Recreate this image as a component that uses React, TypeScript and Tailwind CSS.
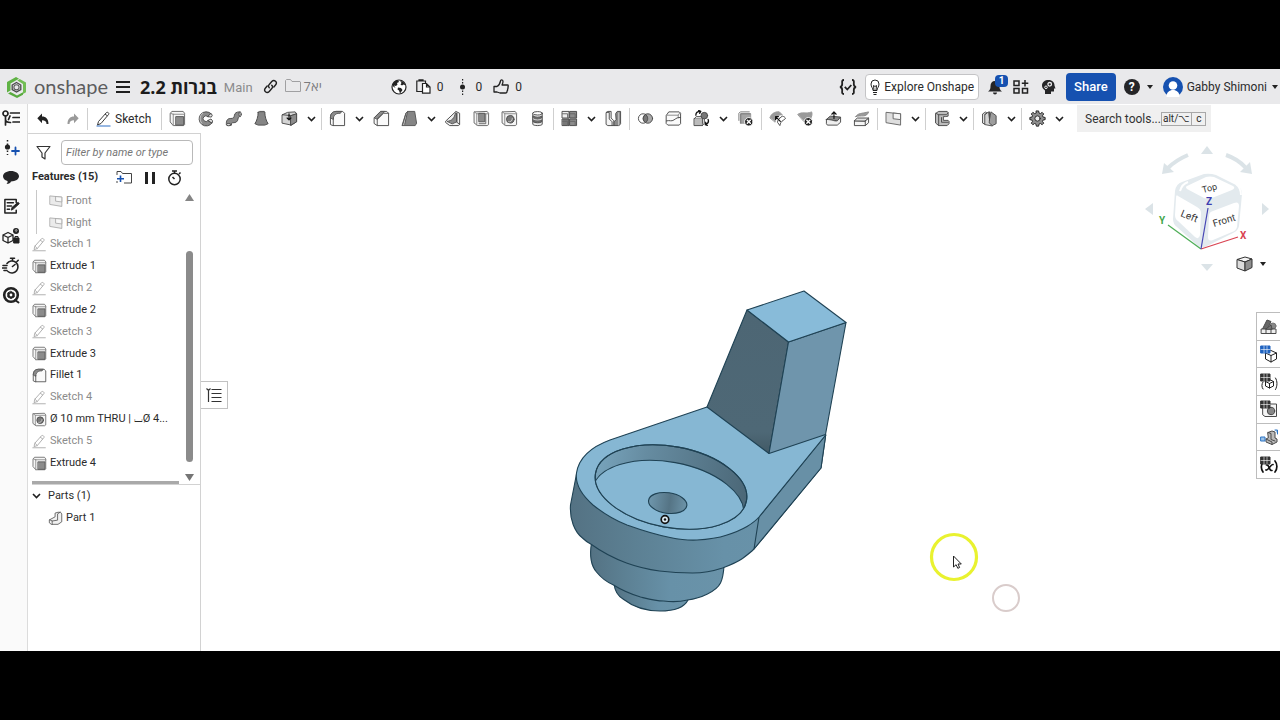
import React from 'react';

type IconProps = { children: React.ReactNode; size?: number; className?: string };

function Icon({ children, size = 18, className = '' }: IconProps) {
  return (
    <svg
      width={size}
      height={size}
      viewBox="0 0 18 18"
      fill="none"
      stroke="#4a4a4a"
      strokeWidth="1"
      strokeLinejoin="round"
      strokeLinecap="round"
      className={`shrink-0 ${className}`}
      aria-hidden="true"
    >
      {children}
    </svg>
  );
}

const art = {
  extrude: (
    <>
      <path d="M1.500 3.500 3 1.500h12l1.500 2v12l-1 1H4.500L1.500 13z" fill="#f6f6f6" stroke="#666" />
      <path d="M4.500 4.500h12M4.500 4.500v12M1.500 3.500l3 1" stroke="#888" />
      <rect x="7.500" y="7" width="8" height="9" fill="#8b8b8b" stroke="#555" />
    </>
  ),
  revolve: (
    <>
      <path d="M15 4A7.500 7.500 0 1 0 16 13.500l-4.200-2.500a3 3 0 1 1-.3-4z" fill="#8b8b8b" />
      <path d="M6 3.500a7 7 0 0 0-1 10.500" stroke="#c8c8c8" />
      <path d="m11.800 11 3-1.500 1.700 2-.5 2z" fill="#e5e5e5" />
      <path d="m11.500 7 3.700.5 1-2L15 4z" fill="#e5e5e5" />
    </>
  ),
  sweep: (
    <>
      <path d="M1.500 15.500c-.5-4 1-6.500 4-6.500 3.500 0 4-.5 4.500-3.500.5-2.500 2-3.500 6-3.500v5c-1.500 0-2 .5-2.200 2.500-.5 3-2.300 4-5.300 4-1.500 0-2 .5-2 2.500z" fill="#8b8b8b" />
      <ellipse cx="4" cy="15.500" rx="2.500" ry="1.200" fill="#ddd" />
      <ellipse cx="16" cy="4.500" rx="1.200" ry="2.500" fill="#ddd" />
    </>
  ),
  loft: (
    <>
      <path d="M5.500 2.500h7c.2 5 1.500 9 3.500 12l-3.500 1.500h-7L2 14.500c2-3 3.300-7 3.500-12z" fill="#858585" />
      <path d="M5.500 2.500 7 1.500h5l.5 1" fill="#ddd" />
    </>
  ),
  thicken: (
    <>
      <path d="M1.500 5 7 2.500l8-.5 1.500 2v8.500L11 16l-9.500-2z" fill="#d4d4d4" />
      <path d="m1.500 5 9 1 6-2M10.500 6v10" />
      <path d="M10.500 6 16.500 4v8.500L10.500 16z" fill="#8b8b8b" />
      <path d="M8.500 4v6M6.500 8.500l2 2 2-2" stroke="#111" strokeWidth="1.300" />
    </>
  ),
  fillet: (
    <>
      <path d="M1.500 15V8c0-4 2-6 6-6.500h7l2 2v13h-12z" fill="#fafafa" />
      <path d="M1.500 8c0-4 2-6.500 6-6.500h6L12 3.500h-2.500c-3 .5-5 2.500-5 6z" fill="#8b8b8b" stroke="#555" />
      <path d="M4.500 9v7.500" />
    </>
  ),
  chamfer: (
    <>
      <path d="M1.500 8 8 1.500h6.500l2 2v13h-12l-3-2z" fill="#fafafa" />
      <path d="M1.500 8 8 1.500h4.500L5 9.500z" fill="#8b8b8b" stroke="#555" />
      <path d="M4.500 9.500v7M4.500 9.500l6.500-6h5.500" stroke="#555" />
    </>
  ),
  draft: (
    <>
      <path d="M5.500 3 7 1.500h7.500L16.500 14l-1.500 2.500H1.500z" fill="#858585" stroke="#555" />
      <path d="m1.500 16.500 4-13.500L7 1.500 4 15" fill="#d5d5d5" stroke="#555" />
    </>
  ),
  rib: (
    <>
      <path d="M1 11.500 11.500 1.500l4 2v12l-1.500 1H5L1 13.500z" fill="#f2f2f2" />
      <path d="M2.500 12c5-.5 7.500-3.500 8.500-9l1.500.5v9L8 14.500z" fill="#8b8b8b" stroke="#555" />
      <path d="M12.500 3.500v9.500l3 2" />
    </>
  ),
  shell: (
    <>
      <path d="M1.500 2 15 1.500l1.500 2v12l-1.500 1H5L1.500 14z" fill="#f6f6f6" stroke="#666" />
      <path d="M1.500 2 4 4h12M4 4v12" stroke="#888" />
      <rect x="6.500" y="3.500" width="6" height="9" fill="#8b8b8b" stroke="#555" />
      <path d="M6.500 14.500h7v-10" stroke="#666" />
    </>
  ),
  hole: (
    <>
      <path d="M1.500 2 15 1.500l1.500 2v12l-1.500 1H5L1.500 14z" fill="#f6f6f6" stroke="#666" />
      <path d="M1.500 2 4 4h12M4 4v12" stroke="#888" />
      <circle cx="9.800" cy="9.800" r="4" fill="#777" />
      <path d="M8 12.500c2 .5 4-1 4-3.500" stroke="#ccc" />
    </>
  ),
  thread: (
    <>
      <path d="M4 3.500v11.500c0 2 10 2 10 0V3.500z" fill="#ececec" />
      <ellipse cx="9" cy="3.500" rx="5" ry="1.800" fill="#fff" />
      <path d="M4.500 6.500c2 1.500 7 1.500 9 0v6c-2 1.500-7 1.500-9 0z" fill="#6b6b6b" />
      <path d="M4.500 9.500c2 1.500 7 1.500 9 0" stroke="#ddd" />
    </>
  ),
  pattern: (
    <>
      <rect x="1.500" y="1.500" width="7" height="7" fill="#eee" />
      <rect x="9.500" y="1.500" width="7" height="7" fill="#8b8b8b" />
      <rect x="1.500" y="9.500" width="7" height="7" fill="#777" />
      <rect x="9.500" y="9.500" width="7" height="7" fill="#8b8b8b" />
      <path d="M1.500 4H7v4.500M9.500 4H15v4.500M1.500 12H7v4.500M9.500 12H15v4.500" stroke="#666" />
    </>
  ),
  mirror: (
    <>
      <path d="M1.500 2.500 3 1.500h3.500v7l3 3v5H3l-1.500-1z" fill="#f3f3f3" />
      <path d="M1.500 2.500h3v7l3 3v4" />
      <path d="M11.500 3.500 13 1.500h3.500v13L15 16.500H9.500v-4l2-2z" fill="#8b8b8b" />
      <path d="M14.500 3v13" stroke="#ccc" />
    </>
  ),
  boolean: (
    <>
      <circle cx="6.500" cy="9" r="5" />
      <circle cx="11.500" cy="9" r="5" fill="#a9a9a9" />
      <path d="M9 4.700a5 5 0 0 1 0 8.600 5 5 0 0 1 0-8.600z" fill="#777" />
    </>
  ),
  split: (
    <>
      <path d="M1.500 5.500 4 2h11l1.500 1.500v11l-1.500 1.500H3l-1.500-1.500z" fill="#fafafa" />
      <path d="M1.500 5.500h12.500l2-3M14 5.500v3" stroke="#888" />
      <path d="M1.500 11.500c4-1 5 1 8-1s4-3 7-2.500" />
    </>
  ),
  transform: (
    <>
      <rect x="1.500" y="9" width="8.500" height="7.500" fill="#bbb" />
      <path d="m1.500 9 2-2h8.500l-2 2M12 7v7l-2 2.500" fill="#e9e9e9" />
      <circle cx="12" cy="6" r="3.500" fill="#777" />
      <path d="M3 5.500C3 3 5 1.500 8 1.500M6 .5l2.200 1L7 3.500M16 10c1 2.500-.5 4.500-3 5.500M13.500 13l-.5 2.500 2.200.7" stroke="#111" strokeWidth="1.400" />
    </>
  ),
  deletePart: (
    <>
      <path d="M2 11V3.500L3.500 2H13" fill="none" stroke="#777" />
      <rect x="4" y="4" width="10.500" height="10" fill="#a5a5a5" stroke="#999" />
      <path d="M4 14V4h10" stroke="#777" />
      <circle cx="12.500" cy="12.500" r="4.500" fill="#222" stroke="#fff" />
      <path d="m10.900 10.900 3.200 3.200m0-3.200-3.200 3.200" stroke="#fff" strokeWidth="1.500" />
    </>
  ),
  moveFace: (
    <>
      <path d="M1 8C2.500 4 6 1.500 11 2l3 3C9 5 7 8 6.500 12.500z" fill="#9a9a9a" stroke="#999" />
      <path d="m11 9 3-2.500c2 .5 3 1 3.500 2.500L15 11c-2 1-3 3-3.500 5.500L9 13c.2-2 1-3 2-4z" fill="#fff" />
      <path d="m12 12-5-5m0 3V7h3" stroke="#111" strokeWidth="1.300" />
    </>
  ),
  deleteFace: (
    <>
      <path d="M1 4.500C5 1.500 10 4.500 15.500 2c1 2.500 0 5-1 7l-6 4z" fill="#9a9a9a" stroke="#999" />
      <circle cx="12" cy="12.500" r="4.500" fill="#222" stroke="#fff" />
      <path d="m10.400 10.900 3.200 3.200m0-3.200-3.200 3.200" stroke="#fff" strokeWidth="1.500" />
    </>
  ),
  offsetFace: (
    <>
      <path d="m1.500 10 4-3.500 11 1-3 3.500z" fill="#8b8b8b" />
      <path d="M1.500 10v4.500l1 1.500h10.500l3.500-3V7.500l-3.500 4c-4 .5-5-1.500-11.500-1.500z" fill="#eee" />
      <path d="M9.500 9V2m-2.300 2.500L9.500 2l2.300 2.500" stroke="#111" strokeWidth="1.200" />
    </>
  ),
  replaceFace: (
    <>
      <path d="M3 7C5 3 9 4 16.500 2c-1 3-3 4-5 4.200C8 6.500 6 6 3 7z" fill="#9a9a9a" stroke="#888" />
      <path d="M1.500 11.500v5H13l3.500-3v-5L13 11.500z" fill="#f5f5f5" />
      <path d="m1.500 11.500 3-3h12l-3.500 3zM13 11.500v5" fill="#e2e2e2" />
    </>
  ),
  plane: (
    <>
      <path d="M1.500 2.500 16.500 4v12L1.500 13.500z" fill="#dedede" stroke="#666" />
      <path d="M9 3.300 16.500 4v6.200L9 9.300z" fill="#f4f4f4" stroke="#666" />
    </>
  ),
  helix: (
    <>
      <path d="M3 3.500 6 1.500h9l1 1.500v3.500l-3 .5h-2v4h5l1 1v2.500l-2 2H6L3 14z" fill="#bdbdbd" />
      <path d="M3 3.500 6 5v11.500M6 5h8l2-2M9 8v5h7" />
    </>
  ),
  sheet: (
    <>
      <path d="M2 4 5 2l1 1v9l-2 3-2-1z" fill="#e5e5e5" />
      <path d="M4 15V5l4-3 1 8 3 1v5.500z" fill="#d5d5d5" />
      <path d="m9 10 1.500-8 5.500 4v8.500l-4 2L9 14z" fill="#9d9d9d" />
      <path d="M9 2v9M4 5l2-2" />
    </>
  ),
  gear: (
    <>
      <path d="M7.800 1h2.400l.4 2.200 1.500.6 1.800-1.300 1.700 1.700-1.300 1.800.6 1.500 2.200.4v2.300l-2.200.4-.6 1.500 1.300 1.800-1.700 1.700-1.800-1.300-1.500.6-.4 2.200H7.800l-.4-2.200-1.500-.6-1.800 1.300-1.700-1.700 1.300-1.800-.6-1.500-2.200-.4V7.900l2.200-.4.6-1.500-1.300-1.800 1.700-1.700 1.800 1.300 1.500-.6z" fill="#8e8e8e" stroke="#222" />
      <circle cx="9" cy="9" r="2.800" fill="#eee" stroke="#222" />
    </>
  ),
  pencil: (
    <>
      <path d="m3.500 11 8-9c1.200-1 3.700.8 2.900 2.200l-8 9.600L3 15z" />
      <path d="m10 3.800 2.800 2.200M3.500 11l2.900 2.800" />
      <path d="M1 16.500h15" />
    </>
  ),
  part: (
    <>
      <path d="M2 10.500 8.500 7V2.500L12 1.500h3l1.500 2v9.500L12 16H4l-2-1.500z" fill="#f1f1f1" stroke="#555" />
      <path d="M2 10.500 5 12l6.500-1V3.500l3-2M5 12v4" stroke="#555" />
    </>
  ),
};

type Tool = { id: keyof typeof art; label: string; menu?: boolean };

const toolGroups: Tool[][] = [
  [
    { id: 'extrude', label: 'Extrude' },
    { id: 'revolve', label: 'Revolve' },
    { id: 'sweep', label: 'Sweep' },
    { id: 'loft', label: 'Loft' },
    { id: 'thicken', label: 'Thicken', menu: true },
  ],
  [
    { id: 'fillet', label: 'Fillet', menu: true },
    { id: 'chamfer', label: 'Chamfer' },
    { id: 'draft', label: 'Draft', menu: true },
    { id: 'rib', label: 'Rib' },
    { id: 'shell', label: 'Shell' },
    { id: 'hole', label: 'Hole' },
    { id: 'thread', label: 'External thread' },
  ],
  [
    { id: 'pattern', label: 'Linear pattern', menu: true },
    { id: 'mirror', label: 'Mirror' },
  ],
  [
    { id: 'boolean', label: 'Boolean' },
    { id: 'split', label: 'Split' },
    { id: 'transform', label: 'Transform', menu: true },
    { id: 'deletePart', label: 'Delete part' },
  ],
  [
    { id: 'moveFace', label: 'Move face' },
    { id: 'deleteFace', label: 'Delete face' },
    { id: 'offsetFace', label: 'Offset face' },
    { id: 'replaceFace', label: 'Replace face' },
  ],
  [{ id: 'plane', label: 'Plane', menu: true }],
  [{ id: 'helix', label: 'Frame', menu: true }],
  [{ id: 'sheet', label: 'Sheet metal', menu: true }],
  [{ id: 'gear', label: 'Custom features', menu: true }],
];

const features: { icon: keyof typeof art; name: string; dim?: boolean }[] = [
  { icon: 'pencil', name: 'Sketch 1', dim: true },
  { icon: 'extrude', name: 'Extrude 1' },
  { icon: 'pencil', name: 'Sketch 2', dim: true },
  { icon: 'extrude', name: 'Extrude 2' },
  { icon: 'pencil', name: 'Sketch 3', dim: true },
  { icon: 'extrude', name: 'Extrude 3' },
  { icon: 'fillet', name: 'Fillet 1' },
  { icon: 'pencil', name: 'Sketch 4', dim: true },
  { icon: 'hole', name: 'Ø 10 mm THRU | ⌴Ø 4...' },
  { icon: 'pencil', name: 'Sketch 5', dim: true },
  { icon: 'extrude', name: 'Extrude 4' },
];

function Chevron() {
  return (
    <svg width="9" height="6" viewBox="0 0 9 6" fill="none" stroke="#1f1f1f" strokeWidth="1.600" aria-hidden="true">
      <path d="m1 1 3.500 3.500L8 1" />
    </svg>
  );
}

function Caret() {
  return (
    <svg width="6" height="4" viewBox="0 0 6 4" fill="#222" className="shrink-0" aria-hidden="true">
      <path d="M0 0h6L3 4z" />
    </svg>
  );
}

function Divider() {
  return <span className="ml-0.5 mr-px h-[22px] w-px shrink-0 bg-[#cfcfcf]" />;
}

function Header() {
  return (
    <header className="flex h-[35px] shrink-0 items-center bg-[#e9e9eb] pl-[5px] pr-0.5 text-xs text-[#2b2b2b]">
      <a href="#home" className="flex items-center gap-1.5" aria-label="onshape">
        <svg width="23" height="24" viewBox="0 0 23 24" fill="none" aria-hidden="true">
          <path d="M2 17.500V7L11 2l3 1.700-8.500 4.700v7.200z" fill="#5fb244" />
          <path d="M12.300 5.500 14.700 4 21 7.400v9.800l-3 1.700V9z" fill="#72bd55" />
          <path d="m3 18.500 2.500-1.500 6.500 3.500 6-3.300v2.500L12 23z" fill="#58aa3e" />
          <path d="m11.500 7.500 4.300 2.500v4.600l-4.300 2.400-4.300-2.400V10z" fill="#e9e9eb" stroke="#4a4a4a" strokeWidth="1.300" />
          <circle cx="11.500" cy="12.300" r="2.600" stroke="#5a5a5a" strokeWidth="1.100" />
        </svg>
        <span className="pb-0.5 font-[Lato] text-xl leading-6 text-[#5c5c5e]">onshape</span>
      </a>
      <button type="button" aria-label="Menu" className="ml-2 flex h-4 w-[14px] flex-col justify-center gap-[3px]">
        <span className="h-0.5 w-full bg-[#1f1f1f]" />
        <span className="h-0.5 w-full bg-[#1f1f1f]" />
        <span className="h-0.5 w-full bg-[#1f1f1f]" />
      </button>
      <h1 dir="rtl" className="ml-2.5 whitespace-nowrap font-['Open_Sans'] text-lg font-bold leading-6 text-[#1c1c1c]">
        בגרות 2.2
      </h1>
      <span className="ml-[7px] pt-0.5 text-[13px] text-[#8b8b8d]">Main</span>
      <button type="button" aria-label="Copy link" className="ml-2.5">
        <Icon size={15}>
          <g stroke="#222" strokeWidth="1.700">
            <path d="m7.500 10.500c-1.500-1.500-1-3 0-4l3-3.500c1.500-1.500 3.200-1.500 4.500-.3s1.300 3 0 4.500L13 9.500" />
            <path d="M10.500 7.500c1.500 1.500 1 3 0 4l-3 3.500c-1.500 1.500-3.200 1.500-4.500.3s-1.300-3 0-4.500L5 8.500" />
          </g>
        </Icon>
      </button>
      <a href="#folder" className="ml-[7px] flex items-center gap-[3px] text-[13px] text-[#7b7b7d]">
        <svg width="16" height="14" viewBox="0 0 16 14" fill="none" stroke="#a0a0a2" aria-hidden="true">
          <path d="M.5 12.500v-11l1-1h4l1.500 2h8l.5.5v9.500z" />
        </svg>
        <span dir="rtl" className="font-['Open_Sans']">יא7</span>
      </a>

      <div className="ml-[69px] flex items-center">
        <button type="button" aria-label="Public document">
          <svg width="16" height="16" viewBox="0 0 16 16" fill="#fff" stroke="#222" strokeWidth="1.200" aria-hidden="true">
            <circle cx="8" cy="8" r="7" />
            <path d="M2 4.500 4 2l3-1 1 2-2 1 .5 1.500L5 7 3 6.500 4.500 9 1.500 7zM9 1.500l4 2 1.500 3-2-1-1.500 1-1.500-1 1-1.500zM7 8.500l3 .5 1.500 2L9 14.500l-1-3-1.500-1z" fill="#222" stroke="none" />
          </svg>
        </button>
        <button type="button" className="ml-[9px] flex items-center gap-1.5">
          <svg width="15" height="15" viewBox="0 0 15 15" fill="none" stroke="#222" strokeWidth="1.200" aria-hidden="true">
            <path d="M6 12.500H.800V2h8.700v2.500M3 2V.800h4V2" />
            <path d="M6.500 4.500h4L14 8v6.200H6.500zM10.500 4.500V8H14" fill="#fff" />
          </svg>
          0
        </button>
        <button type="button" className="ml-4 flex items-center gap-[11px]">
          <svg width="5" height="16" viewBox="0 0 5 16" fill="#222" aria-hidden="true">
            <circle cx="2.500" cy="8" r="2.500" />
            <path d="M2 0h1.200v1.500H2zM2 3h1.200v1.500H2zM2 11.500h1.200V13H2zM2 14.500h1.200V16H2z" />
          </svg>
          0
        </button>
        <button type="button" className="ml-[11px] flex items-center gap-1.5">
          <svg width="16" height="16" viewBox="0 0 16 16" fill="none" stroke="#222" strokeWidth="1.300" strokeLinejoin="round" aria-hidden="true">
            <path d="M1 7.500h3c2-1 3-3 3.500-5.500.2-1.500 2.500-1.500 2.500.5 0 1.500-.5 2.500-1 3.500h5.500c1 0 1 1.500.3 2 .5.5.5 1.500-.3 2 .3.700.2 1.500-.5 2 .2 1-.4 2-1.500 2H7L4 13H1z" />
          </svg>
          0
        </button>
      </div>

      <div className="ml-auto flex items-center">
        <button type="button" aria-label="Feature script" className="mr-2">
          <svg width="18" height="18" viewBox="0 0 18 18" fill="none" stroke="#222" strokeWidth="1.800" aria-hidden="true">
            <path d="M5 2C2.500 2 3.200 4 3.200 6 3.200 8 2.500 8.700 1 9c1.500.3 2.200 1 2.200 3 0 2-.7 4 1.800 4M13 2c2.500 0 1.800 2 1.800 4 0 2 .7 2.700 2.200 3-1.500.3-2.200 1-2.200 3 0 2 .7 4-1.800 4M5.800 8.800l2.500 2.700 4-4.500" />
          </svg>
        </button>
        <button type="button" className="flex h-[26px] items-center gap-1 whitespace-nowrap rounded border border-[#c4c4c6] bg-white px-1">
          <svg width="10" height="16" viewBox="0 0 10 16" fill="none" stroke="#222" aria-hidden="true">
            <path d="M3 11.500C3 9 1 8 1 5a4 4 0 0 1 8 0c0 3-2 4-2 6.500zM4 11.500 3.500 6.500l1.500 1 1.500-1-.5 5M3 13.500h4M3.500 15.500h3" />
          </svg>
          Explore Onshape
        </button>
        <button type="button" aria-label="Notifications, 1 new" className="relative ml-2">
          <svg width="16" height="18" viewBox="0 0 16 18" fill="#252527" aria-hidden="true">
            <path d="M8 3c3 0 4.500 2 4.500 5 0 3 .5 4 2.500 5.500H1C3 12 3.500 11 3.500 8 3.500 5 5 3 8 3zM6 14.500h4a2 2 0 0 1-4 0z" />
          </svg>
          <span className="absolute -top-[3px] left-2 flex h-3 w-[13px] items-center justify-center rounded-sm bg-[#1651b0] text-[10px] font-bold text-white">
            1
          </span>
        </button>
        <button type="button" aria-label="Apps" className="ml-2.5">
          <svg width="16" height="16" viewBox="0 0 16 16" fill="none" stroke="#222" strokeWidth="1.500" aria-hidden="true">
            <path d="M1 2h5v4.500H1zM1 9.500h5V14H1zM9.500 9.500h5V14h-5zM12 1v6.500M8.800 4.300h6.500" />
          </svg>
        </button>
        <button type="button" aria-label="Learning center" className="ml-3">
          <svg width="15" height="16" viewBox="0 0 15 16" fill="#252527" aria-hidden="true">
            <path d="M7.500 1c4 0 6 2.500 6 5.500l1 3h-1.500v3H10V15H4v-3.500C2 10 1 8.500 1 6.500 1 3 4 1 7.500 1z" />
            <circle cx="8.700" cy="5.300" r="1.800" fill="none" stroke="#e9e9eb" strokeWidth="1.300" />
            <circle cx="5" cy="8.300" r="1.300" fill="none" stroke="#e9e9eb" />
          </svg>
        </button>
        <button type="button" className="ml-2.5 h-7 rounded bg-[#1651b0] px-2 text-[13px] font-medium text-white">
          Share
        </button>
        <button type="button" aria-label="Help" className="ml-2 flex items-center gap-[7px]">
          <span className="flex size-4 items-center justify-center rounded-full bg-[#252527] text-xs font-bold text-white">?</span>
          <Caret />
        </button>
        <button type="button" className="ml-2.5 flex items-center whitespace-nowrap">
          <svg width="20" height="20" viewBox="0 0 20 20" className="mr-1" aria-hidden="true">
            <circle cx="10" cy="10" r="10" fill="#1651b0" />
            <circle cx="10" cy="8.500" r="4.300" fill="#fff" />
            <path d="M3.500 20c0-5 3-7 6.500-7s6.500 2 6.500 7z" fill="#fff" />
          </svg>
          Gabby Shimoni
          <span className="ml-[5px]">
            <Caret />
          </span>
        </button>
      </div>
    </header>
  );
}

function Toolbar() {
  return (
    <div className="flex h-[29px] shrink-0 items-center pl-1.5 pr-[69px] text-xs text-[#2b2b2b]">
      <button type="button" aria-label="Undo" className="flex w-[18px] justify-center">
        <svg width="12" height="12" viewBox="0 0 12 12" fill="#222" aria-hidden="true">
          <path d="M5 .5v3c4 0 6.500 2.500 6.500 7.500h-2C9.500 8.500 8 7.300 5 7.300v3L.3 5.300z" />
        </svg>
      </button>
      <button type="button" aria-label="Redo" className="ml-3 flex w-[18px] justify-center">
        <svg width="12" height="12" viewBox="0 0 12 12" fill="#9a9a9a" aria-hidden="true">
          <path d="M7 .5v3C3 3.500.5 6 .5 11h2C2.500 8.500 4 7.300 7 7.300v3l4.700-5z" />
        </svg>
      </button>
      <span className="ml-[5px] h-[22px] w-px shrink-0 bg-[#cfcfcf]" />
      <button type="button" className="mr-2 flex items-center gap-[3px] pl-2">
        <svg width="16" height="16" viewBox="0 0 16 16" fill="none" stroke="#3c3c3c" aria-hidden="true">
          <path d="m2.500 10.500 8-9c1-.8 3 .6 2.200 1.800l-7.700 9.200-3.500 1.500zM9 3l2.300 1.800" />
          <path d="M.5 15h14" stroke="#2f6fc4" />
        </svg>
        Sketch
      </button>
      {toolGroups.map((group, i) => (
        <React.Fragment key={i}>
          <Divider />
          {group.map((tool) => (
            <React.Fragment key={tool.id}>
              <button type="button" aria-label={tool.label} className="flex w-7 shrink-0 justify-center">
                <Icon size={17}>{art[tool.id]}</Icon>
              </button>
              {tool.menu && (
                <button type="button" aria-label={`${tool.label} menu`} className="flex w-4 shrink-0 justify-center">
                  <Chevron />
                </button>
              )}
            </React.Fragment>
          ))}
        </React.Fragment>
      ))}
      <label className="ml-auto flex h-[27px] w-[134px] shrink-0 items-center bg-[#f0f0f0] pl-2">
        <input
          type="text"
          aria-label="Search tools"
          placeholder="Search tools..."
          className="w-[76px] bg-transparent text-xs outline-none placeholder:text-[#333]"
        />
        <kbd className="flex h-[14px] items-center border border-[#a8a8a8] px-px font-[Roboto] text-[10px]">alt/⌥</kbd>
        <kbd className="flex h-[14px] w-[14px] items-center justify-center border border-l-0 border-[#a8a8a8] font-[Roboto] text-[10px]">c</kbd>
      </label>
    </div>
  );
}

function Rail() {
  return (
    <nav className="flex w-7 shrink-0 flex-col border-r border-[#dcdcdc] bg-[#fafafa]" aria-label="Document panels">
      <div className="flex h-[205px] w-[22px] flex-col items-center justify-between">
        <button type="button" aria-label="Features" className="flex h-7 items-center">
          <Icon size={18}>
            <g stroke="#222" strokeWidth="1.700">
              <circle cx="3.500" cy="4.500" r="2.500" />
              <path d="M3.500 7v3.500c0 2 2 3 5 3M8.500 4h9M11 8.500h6.500M11 13h6.500M3.500 10v6M8 7l-1.500 3.500" />
            </g>
          </Icon>
        </button>
        <button type="button" aria-label="Versions" className="flex h-7 items-center">
          <Icon size={18}>
            <circle cx="5.500" cy="8" r="2.600" fill="#222" stroke="none" />
            <path d="M5.500 1v15" stroke="#222" strokeWidth="1.500" strokeDasharray="1.500 2" strokeLinecap="butt" />
            <path d="M13.500 8.500v7M10 12h7" stroke="#1651b0" strokeWidth="1.800" />
          </Icon>
        </button>
        <button type="button" aria-label="Comments" className="flex h-7 items-center">
          <Icon size={18}>
            <path d="M9 3c4.500 0 8 2.300 8 5.300s-3.500 5.200-8 5.200c-.5 1.500-2 2.500-4.500 2.500 1-1 1.300-2 1-3C2.700 12.200 1 10.500 1 8.300 1 5.300 4.500 3 9 3z" fill="#252527" stroke="none" />
          </Icon>
        </button>
        <button type="button" aria-label="Properties" className="flex h-7 items-center">
          <Icon size={17}>
            <g stroke="#222" strokeWidth="1.600">
              <path d="M14 5V1.500H2V16h12v-3M4.500 5H11M4.500 8.500H9M4.500 12H7" />
              <path d="m9 12.500.5-2.500L16 4.500l1.200 1.500-6 5.500z" fill="#222" strokeWidth="1" />
            </g>
          </Icon>
        </button>
        <button type="button" aria-label="Where used" className="flex h-7 items-center">
          <Icon size={18}>
            <path d="M1 8 6 5.500 11 8v5.500L6 16l-5-2.500zM1 8l5 2.500L11 8M6 10.500V16" stroke="#222" strokeWidth="1.300" />
            <circle cx="14" cy="4" r="3" fill="#222" stroke="none" />
            <path d="M13.200 3.300c0-1 1.700-1 1.700 0 0 .7-.9.700-.9 1.500" stroke="#fff" strokeWidth=".7" />
            <path d="M12 11h5v5h-5z" fill="#222" stroke="#222" />
            <path d="M13 11V9.500h3V11" stroke="#222" />
          </Icon>
        </button>
        <button type="button" aria-label="History" className="flex h-7 items-center">
          <Icon size={18}>
            <path d="M5 6.500A6 6 0 1 1 6 14.500M10.500 3.500V1.500M8.500 1.200h4M15 4.500l1.200-1.200M10.500 9.500l2.500-2M1 8.500h4M.5 11h4M2 13.500h3" stroke="#222" strokeWidth="1.600" />
          </Icon>
        </button>
        <button type="button" aria-label="Assistant" className="flex h-7 items-center">
          <Icon size={18}>
            <circle cx="9" cy="9" r="6.800" stroke="#222" strokeWidth="2.600" />
            <path d="m9 5.500 3.200 1.800v3.600L9 12.500l-3.200-1.600V7.300z" fill="#222" stroke="#222" />
            <circle cx="9" cy="9" r="1.400" fill="#fff" stroke="none" />
            <path d="m13 14 3.500 2.500" stroke="#222" strokeWidth="2" />
          </Icon>
        </button>
      </div>
    </nav>
  );
}

function FeaturePanel() {
  return (
    <aside className="flex w-[173px] shrink-0 flex-col border-r border-t border-[#d2d2d2] pl-1 text-[11px] text-[#2b2b2b]">
      <label className="flex items-center pr-[7px] pt-1.5">
        <svg width="15" height="15" viewBox="0 0 15 15" fill="none" stroke="#333" strokeWidth="1.200" className="ml-1 mr-2.5" aria-hidden="true">
          <path d="M1 1.500h13L9 8v6l-3-2V8z" strokeLinejoin="round" />
        </svg>
        <input
          type="text"
          aria-label="Filter features"
          placeholder="Filter by name or type"
          className="h-[25px] w-0 flex-1 rounded-sm border border-[#b9b9b9] px-1 italic outline-none placeholder:text-[#777]"
        />
      </label>
      <div className="flex h-[25px] items-center">
        <h2 className="font-bold">Features (15)</h2>
        <button type="button" aria-label="Add folder" className="ml-auto">
          <svg width="16" height="13" viewBox="0 0 16 13" fill="none" stroke="#444" aria-hidden="true">
            <path d="M1 4V.5h4l1.500 2h9V12H8M1 10v2" />
            <path d="M4.500 4.500v6.500M1 7.800h7" stroke="#1651b0" strokeWidth="1.600" />
          </svg>
        </button>
        <button type="button" aria-label="Pause regeneration" className="ml-[13px] flex gap-1">
          <span className="h-3 w-[3px] bg-[#222]" />
          <span className="h-3 w-[3px] bg-[#222]" />
        </button>
        <button type="button" aria-label="Regeneration times" className="ml-3 mr-[18px]">
          <svg width="15" height="16" viewBox="0 0 15 16" fill="none" stroke="#222" strokeWidth="1.500" aria-hidden="true">
            <circle cx="7.500" cy="9" r="5.700" />
            <path d="M7.500 3V1M5 1h5M12 4l1.500-1.500M7.500 9 5.500 7" />
          </svg>
        </button>
      </div>

      <div className="flex h-[295px] border-b border-[#d2d2d2]">
        <div className="flex min-w-0 flex-1 flex-col justify-between">
          <ul className="flex h-[284px] flex-col">
            <li className="flex flex-[2]">
              <ul className="ml-1 flex flex-1 flex-col border-l border-[#c8c8c8] text-[#8b8b8b]">
                {['Front', 'Right'].map((name) => (
                  <li key={name} className="flex flex-1 items-center gap-[3px] pl-3">
                    <Icon size={14} className="opacity-60">{art.plane}</Icon>
                    {name}
                  </li>
                ))}
              </ul>
            </li>
            {features.map((f) => (
              <li key={f.name} className="flex min-h-0 flex-1 items-center gap-[3px] whitespace-nowrap">
                <Icon size={15} className={f.dim ? 'opacity-50' : ''}>{art[f.icon]}</Icon>
                <span className={f.dim ? 'text-[#8b8b8b]' : ''}>{f.name}</span>
              </li>
            ))}
          </ul>
          <span className="h-[3px] w-[147px] bg-[#a9a9a9]" />
        </div>
        <div className="flex w-2 flex-col items-center pb-[3px] pt-1">
          <svg width="9" height="7" viewBox="0 0 9 7" fill="#858585" aria-hidden="true"><path d="M0 7h9L4.500 0z" /></svg>
          <span className="mt-[50px] w-[7px] flex-1 rounded-full bg-[#8b8b8b]" />
          <svg width="9" height="7" viewBox="0 0 9 7" fill="#757575" className="mt-3" aria-hidden="true"><path d="M0 0h9L4.500 7z" /></svg>
        </div>
        <span className="w-[7px] shrink-0" />
      </div>

      <button type="button" className="flex h-[22px] items-center gap-[7px]">
        <Chevron />
        Parts (1)
      </button>
      <div className="flex h-[22px] items-center gap-[3px] pl-4">
        <Icon size={15}>{art.part}</Icon>
        Part 1
      </div>
    </aside>
  );
}

function Model() {
  return (
    <svg className="absolute inset-0 size-full" viewBox="201 133 1079 518" role="img" aria-label="Part 1">
      <defs>
        <linearGradient id="side" x1="0" x2="1" y1="0" y2="0">
          <stop offset="0" stopColor="#547283" />
          <stop offset="0.25" stopColor="#5c8093" />
          <stop offset="0.6" stopColor="#6791a8" />
          <stop offset="1" stopColor="#6a93a9" />
        </linearGradient>
        <linearGradient id="wall" x1="0" x2="1" y1="0" y2="0">
          <stop offset="0" stopColor="#77a3bb" />
          <stop offset="0.3" stopColor="#668ca1" />
          <stop offset="1" stopColor="#4b6777" />
        </linearGradient>
        <linearGradient id="bore" x1="0" x2="1" y1="0" y2="0">
          <stop offset="0" stopColor="#6f97ad" />
          <stop offset="0.55" stopColor="#557485" />
          <stop offset="1" stopColor="#6d94a9" />
        </linearGradient>
        <linearGradient id="face" x1="0" x2="0" y1="0" y2="1">
          <stop offset="0" stopColor="#4d6674" />
          <stop offset="0.85" stopColor="#4e6876" />
          <stop offset="1" stopColor="#415965" />
        </linearGradient>
        <clipPath id="recess">
          <ellipse cx="671" cy="487" rx="76.700" ry="40.500" transform="rotate(10.400 671 487)" />
        </clipPath>
      </defs>
      <g stroke="#1f4254" strokeWidth="1.100" strokeLinejoin="round">
        <path d="M614 584c1 8 4 12 9 15 9 7 20 12 37 12 15 0 24-3 28-11v-12z" fill="url(#side)" />
        <path d="M591.500 543c-2 12-1 22 5 29 4 5 10 10 17 13 8 5 17 9 27 12 8 2 15 4 23 4 8 1 16 1 24-1 8-1 14-3 20-6 6-3 11-7 13-11 2-4 3-9 3.500-17z" fill="url(#side)" />
        <path d="M576.700 473 570.500 505c-1 14 4 27 12 33 3 3 6 5 9 6.500 11 8 23 14 35 18.500 11 4 22 6.500 33 8 12 1.500 22 2 33 2 11 0 21-2 30-5 8-3 15-6 20-9.500 4-3 8-6 11.500-9.500L821 468l4.700-33z" fill="url(#side)" />
        <path d="M759 517 825.700 435 821 468 754 549z" fill="#6890a6" />
        <path d="M707 407 610 440c-19 7-31 17-33.500 33-1.500 12 5 22 16.500 32 10 8 21 15 34 20 14 5 28 9.500 43 12.500 9 1.800 18 3 27 2.500 11-.5 21-2 30-5 8-2.500 14-5 20-8.500 5-3 9-6 12-9.500L825.700 435z" fill="#86b7d3" />
        <path d="M747 310 788.500 342 769 453.500 707 407z" fill="url(#face)" />
        <path d="M788.500 342 846 322.500 825.500 434.500 769 453.500z" fill="#6f95ac" />
        <path d="M747 310 804 291 846 322.500 788.500 342z" fill="#88bbd9" />
        <ellipse cx="671" cy="487" rx="76.700" ry="40.500" transform="rotate(10.400 671 487)" fill="url(#wall)" />
        <g clipPath="url(#recess)">
          <ellipse cx="668" cy="502.500" rx="76.700" ry="40.500" transform="rotate(10.400 668 502.500)" fill="#86b7d3" />
        </g>
        <ellipse cx="671" cy="487" rx="76.700" ry="40.500" transform="rotate(10.400 671 487)" fill="none" />
        <ellipse cx="667.700" cy="503" rx="19.300" ry="10.300" transform="rotate(8 667.700 503)" fill="url(#bore)" />
      </g>
      <circle cx="665" cy="519.500" r="3.800" fill="#fff" fillOpacity="0.700" stroke="#111" strokeWidth="1.700" />
      <circle cx="665" cy="519.500" r="1.200" fill="#111" />
      <circle cx="954" cy="557" r="22.500" fill="none" stroke="#e9f22f" strokeWidth="3.200" />
      <path d="M953.500 556v11l2.600-2.300 1.700 3.600 1.800-.8-1.600-3.500h3.300z" fill="#fff" stroke="#222" strokeWidth="1" />
      <circle cx="1006" cy="598" r="13" fill="none" stroke="#d9cccb" strokeWidth="2" />
    </svg>
  );
}

function ViewCube() {
  return (
    <svg width="130" height="130" viewBox="1140 142 130 130" fill="none" role="img" aria-label="View cube">
      <g fill="#dbe3e7">
        <path d="M1207 146l6 8h-12zM1207 271l-6-7h12zM1145 209l8-6v12zM1269 209l-7-6v12z" />
        <path d="M1162 174l2-11 10 9zM1252 174l-2-12-10 10z" />
      </g>
      <path d="M1168 168q8-8 20-13M1226 155q12 4 20 13" stroke="#dbe3e7" strokeWidth="4" />
      <path d="M1182 182 1204 174q6-1 12 1l20 10q6 3 6 9l-3 32q-1 5-6 7l-28 14q-4 1-7-1l-21-19q-4-3-4-8l2-28q1-7 7-9z" fill="#e3eaee" />
      <path d="M1187 186 1206 177q4-1 8 0l19 9q3 2-1 4l-20 8q-4 1-8 0l-17-9q-2-2 0-3z" fill="#fff" />
      <path d="M1178 196 1197 207q4 2 4 6l-1 22q-1 5-5 2l-17-16q-3-2-3-6l1-17q0-4 2-2zM1213 211 1234 203q5-2 5 3l-2 21q-1 4-5 5l-19 8q-5 2-5-3l1-21q0-4 4-5z" fill="#fff" />
      <path d="M1180 191q2-7 8-9M1236 184q5 4 5 11" stroke="#fff" strokeWidth="2" />
      <path d="M1201 249 1168 225" stroke="#4fae58" strokeWidth="1.200" />
      <path d="M1201 249 1238 237" stroke="#d94352" strokeWidth="1.200" />
      <path d="M1201 249 1208 208" stroke="#4747b5" strokeWidth="1.200" />
      <g fontFamily="Roboto, sans-serif" fontSize="10" fill="#333">
        <text x="1180" y="216" transform="rotate(22 1180 216)">Left</text>
        <text x="1214" y="227" transform="rotate(-17 1214 227)">Front</text>
        <text x="1203" y="193" fontSize="9" transform="rotate(-15 1203 193)">Top</text>
      </g>
      <g fontFamily="Roboto, sans-serif" fontSize="10" fontWeight="700">
        <text x="1206" y="205" fill="#3d3db0">Z</text>
        <text x="1159" y="224" fill="#3fa64b">Y</text>
        <text x="1240" y="239" fill="#d94352">X</text>
      </g>
    </svg>
  );
}

const grid = (color: string) => (
  <>
    <path d="M1 1h9v7H1z" fill={color} stroke={color} />
    <path d="M4 1v7M7 1v7M1 4.500h9" stroke="#fff" strokeWidth=".6" />
  </>
);

const tables = [
  {
    label: 'Appearances',
    icon: (
      <>
        <path d="m2 13 5-10 4 1.500-4 9z" fill="#666" />
        <circle cx="13" cy="9" r="3" fill="#888" stroke="#777" />
        <path d="M1.500 12H16v4.500H1.500z" fill="#eee" />
        <path d="m6 12 5-4 1 4z" fill="#777" />
        <path d="M6 12v4.500M11 12v4.500" />
      </>
    ),
  },
  {
    label: 'Configurations',
    icon: (
      <>
        <path d="m11 5.500 5.500 2.500v6L11 17l-5.500-3V8zM5.500 8l5.500 2.500L16.500 8M11 10.500V17" fill="#fff" stroke="#222" />
        {grid('#1f63c0')}
      </>
    ),
  },
  {
    label: 'Configuration table',
    icon: (
      <>
        <path d="m9.500 6.500 4 2V13l-4 2-4-2V8.500zM5.500 8.500l4 2 4-2M9.500 10.500V15M3 9c-1.500 2-1.500 5 0 7M15.500 5c2 3 2 8 0 11.500" stroke="#222" />
        {grid('#333')}
      </>
    ),
  },
  {
    label: 'Hole table',
    icon: (
      <>
        <path d="M3 4h13.500v12.500H5L3 15z" fill="#f5f5f5" />
        <circle cx="11" cy="11" r="3.700" fill="#888" />
        {grid('#333')}
      </>
    ),
  },
  {
    label: 'Section view',
    icon: (
      <>
        <path d="M8 4.500 12 3l3 1v6l2 1v3l-5 2.500L6 14v-3l2-1z" fill="#bbb" />
        <path d="m8 4.500 3 1v6l4 1.500M6 11l6 3v2.500" />
        <path d="M1 9h4v4H1zM15 2h2.500v4" fill="#9cc4ea" stroke="#2f75c4" />
      </>
    ),
  },
  {
    label: 'Variable table',
    icon: (
      <>
        <path d="M3 6c-2 3-2 7 0 10M15 5c2.500 3 2.500 8 0 11M6.500 9c3-1 2 6 5.500 5.500M13 8.500c-2-.5-5 6.500-7 5.500" stroke="#111" strokeWidth="1.700" />
        {grid('#333')}
      </>
    ),
  },
];

function Viewport() {
  return (
    <main className="relative flex min-w-0 flex-1">
      <Model />
      <button
        type="button"
        aria-label="Feature list options"
        className="absolute left-0 top-[248px] flex h-7 w-[27px] items-center justify-center border border-l-0 border-[#c2c2c2] bg-white"
      >
        <svg width="16" height="16" viewBox="0 0 16 16" fill="none" stroke="#333" strokeWidth="1.200" aria-hidden="true">
          <path d="M5.500 2.500h10M5.500 6.500h10M5.500 10.500h10M5.500 14.500h10M2.500 4v11M.5 1.500l2 2 2-2" />
        </svg>
      </button>
      <div className="absolute right-2.5 top-[9px]">
        <ViewCube />
      </div>
      <button type="button" aria-label="View options" className="absolute right-3.5 top-[123px] flex items-center gap-[7px]">
        <svg width="17" height="16" viewBox="0 0 17 16" stroke="#333" strokeLinejoin="round" aria-hidden="true">
          <path d="M1 3.500 9 1l7 2-7 3z" fill="#f5f5f5" />
          <path d="M1 3.500 9 6v9l-8-3z" fill="#dcdcdc" />
          <path d="M9 6l7-3v8.500L9 15z" fill="#8f8f8f" />
        </svg>
        <Caret />
      </button>
      <div className="absolute right-0 top-[179px] flex h-[167px] w-6 flex-col border border-r-0 border-[#bdbdbd] bg-white">
        {tables.map((t) => (
          <button
            key={t.label}
            type="button"
            aria-label={t.label}
            className="flex flex-1 items-center justify-center border-b border-[#bdbdbd] last:border-b-0"
          >
            <Icon size={18}>{t.icon}</Icon>
          </button>
        ))}
      </div>
    </main>
  );
}

export default function App() {
  return (
    <div className="flex min-h-screen flex-col bg-black py-[69px] font-[Roboto,'Open_Sans','DejaVu_Sans',sans-serif]">
      <div className="flex flex-1 flex-col overflow-hidden bg-white">
        <Header />
        <div className="flex flex-1">
          <Rail />
          <div className="flex min-w-0 flex-1 flex-col">
            <Toolbar />
            <div className="flex flex-1">
              <FeaturePanel />
              <Viewport />
            </div>
          </div>
        </div>
      </div>
    </div>
  );
}
